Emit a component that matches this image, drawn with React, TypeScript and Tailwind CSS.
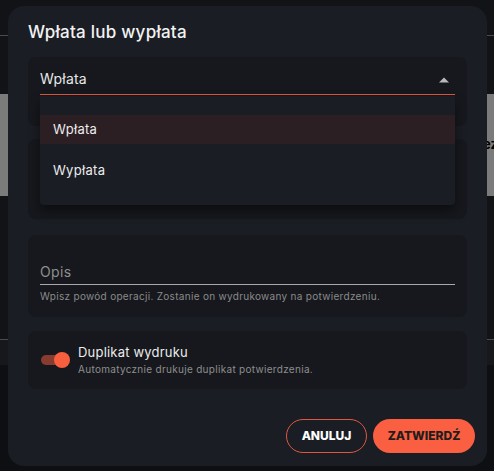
import { useState } from 'react'

const font = { fontFamily: 'Inter, "Noto Sans", sans-serif' }

function Card({ children, className = '' }: { children: React.ReactNode; className?: string }) {
  return <div className={`rounded-lg bg-[#16181d] px-3 ${className}`}>{children}</div>
}

export default function App() {
  const [duplicate, setDuplicate] = useState(true)

  return (
    <div className="relative h-[471px] w-[494px] overflow-hidden bg-[#121317]" style={font}>
      {/* page behind the backdrop */}
      <div className="flex h-full flex-col">
        <div className="h-[35px]" />
        <div className="h-px bg-[#4a4b4f]" />
        <div className="h-[58px]" />
        <div className="flex h-[102px] items-center justify-end bg-[#7b7b7b] text-[13px] font-bold text-black">
          <span className="-mr-1">ez</span>
        </div>
        <div className="h-[143px]" />
        <div className="h-px bg-[#4a4b4f]" />
        <div className="h-[25px] bg-[#17181c]" />
        <div className="flex-1 bg-[#0e0f12]" />
      </div>

      {/* dialog */}
      <div className="absolute left-[8px] top-[6px] flex h-[460px] w-[479px] flex-col rounded-2xl bg-[#1b1d24] px-5">
        <h2 className="pt-[15px] text-[17px] font-medium leading-[22px] tracking-[0.25px] text-[#f2f2f2]">Wpłata lub wypłata</h2>

        <div className="mt-[14px] flex flex-col">
          <Card className="relative h-[69px]">
            <div className="flex h-[38px] items-end justify-between border-b border-[#e0573f] pb-[5px]">
              <span className="text-[14px] tracking-[0.2px] text-[#e8e8e8]">Wpłata</span>
              <svg width="10" height="6" viewBox="0 0 10 6" className="mb-[6px] mr-[6px]">
                <path d="M0 5.5 L5 0.5 L10 5.5 Z" fill="#b8b8b8" />
              </svg>
            </div>

            <div className="absolute left-3 right-3 top-[39px] z-10 flex h-[109px] flex-col rounded-b bg-[#1b1d24] pt-[19px] shadow-[0_6px_12px_rgba(0,0,0,0.45)]">
              <div className="flex h-[29px] items-center bg-[#2c1f24] pl-[13px] text-[13px] tracking-[0.3px] text-[#ececec]">Wpłata</div>
              <div className="flex h-[54px] items-center pl-[13px] text-[13px] tracking-[0.3px] text-[#ececec]">Wypłata</div>
            </div>
          </Card>

          <Card className="mt-[13px] flex h-[80px] flex-col justify-end pb-[14px]">
            <p className="text-[10px] leading-[14px] tracking-[0.3px] text-[#8a8a8a]">Wpisz kwotę operacji, np. 100,00 zł (opcjonalnie).</p>
          </Card>

          <Card className="mt-[16px] flex h-[82px] flex-col pt-[27px]">
            <div className="flex h-[23px] items-start border-b border-[#a8a8a8] text-[14px] leading-[20px] tracking-[0.4px] text-[#8f8f8f]">Opis</div>
            <p className="mt-[4px] text-[10px] leading-[14px] tracking-[0.3px] text-[#8a8a8a]">Wpisz powód operacji. Zostanie on wydrukowany na potwierdzeniu.</p>
          </Card>

          <Card className="mt-[14px] flex h-[58px] items-center gap-2 pl-[13px]">
            <button
              onClick={() => setDuplicate(!duplicate)}
              className="relative flex h-4 w-[29px] items-center"
            >
              <span className={`h-[10px] w-[24px] rounded-full ${duplicate ? 'bg-[#8a3b2f]' : 'bg-[#555]'}`} />
              <span className={`absolute h-4 w-4 rounded-full ${duplicate ? 'right-0 bg-[#f85f3f]' : 'left-0 bg-[#ccc]'}`} />
            </button>
            <div className="flex flex-col">
              <span className="text-[13px] leading-[17px] tracking-[0.2px] text-[#ececec]">Duplikat wydruku</span>
              <span className="mt-[1px] text-[10px] tracking-[0.3px] text-[#8e8e8e]">Automatycznie drukuje duplikat potwierdzenia.</span>
            </div>
          </Card>
        </div>

        <div className="mt-auto mb-[13px] -mr-2 flex justify-end gap-[6px]">
          <button className="h-[34px] w-[81px] rounded-full border border-[#e0573f] text-[12px] font-extrabold text-white">ANULUJ</button>
          <button className="h-[34px] w-[102px] rounded-full bg-[#f95f40] text-[12px] font-extrabold text-[#231c1c]">ZATWIERDŹ</button>
        </div>
      </div>
    </div>
  )
}
